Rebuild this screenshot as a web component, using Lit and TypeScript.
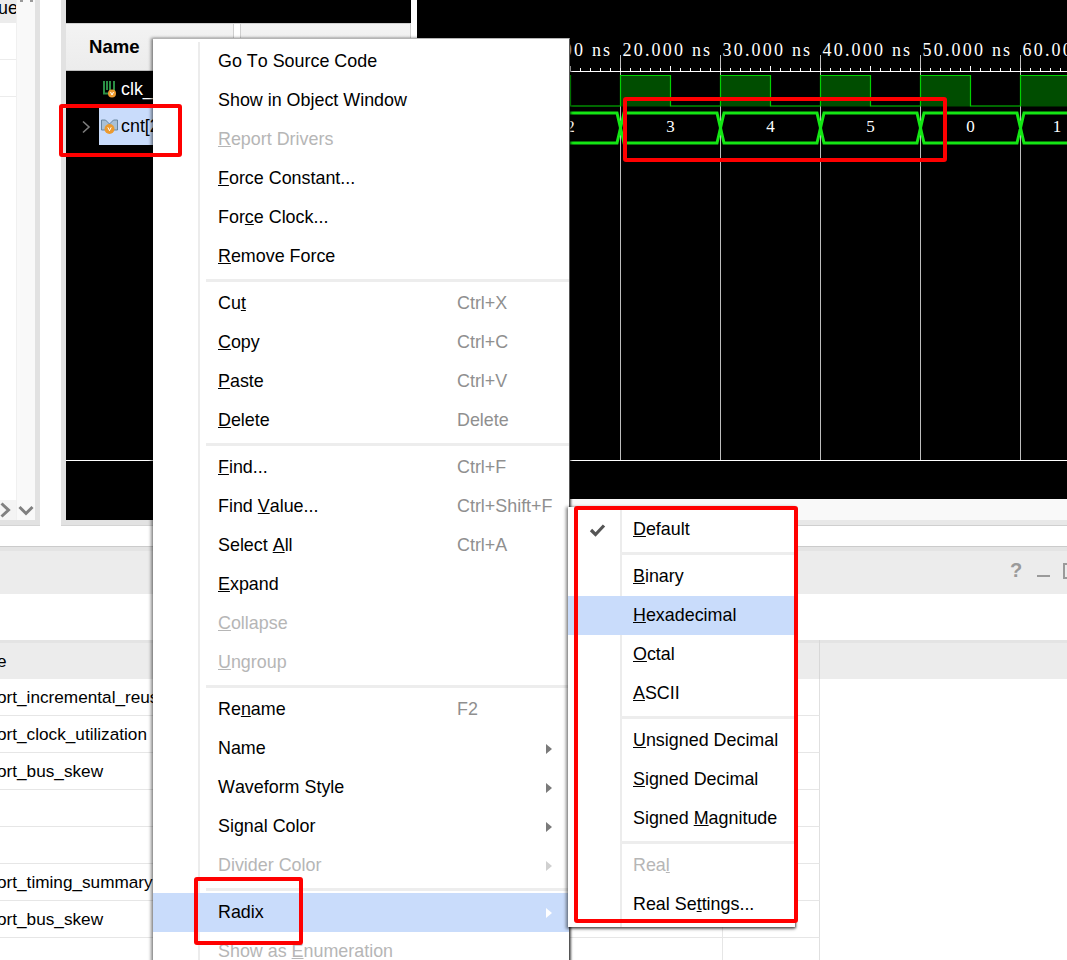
import { LitElement, html, css, svg } from "lit";
import { customElement } from "lit/decorators.js";

type Item = { l?: any; k?: string; dis?: boolean; sub?: boolean; hi?: boolean; check?: boolean; sep?: boolean };
const S: Item = { sep: true };

const MAIN: Item[] = [
  { l: "Go To Source Code" },
  { l: "Show in Object Window" },
  { l: html`<u>R</u>eport Drivers`, dis: true },
  { l: html`<u>F</u>orce Constant...` },
  { l: html`For<u>c</u>e Clock...` },
  { l: html`<u>R</u>emove Force` },
  S,
  { l: html`Cu<u>t</u>`, k: "Ctrl+X" },
  { l: html`<u>C</u>opy`, k: "Ctrl+C" },
  { l: html`<u>P</u>aste`, k: "Ctrl+V" },
  { l: html`<u>D</u>elete`, k: "Delete" },
  S,
  { l: html`<u>F</u>ind...`, k: "Ctrl+F" },
  { l: html`Find <u>V</u>alue...`, k: "Ctrl+Shift+F" },
  { l: html`Select <u>A</u>ll`, k: "Ctrl+A" },
  { l: html`<u>E</u>xpand` },
  { l: html`<u>C</u>ollapse`, dis: true },
  { l: html`<u>U</u>ngroup`, dis: true },
  S,
  { l: html`Re<u>n</u>ame`, k: "F2" },
  { l: "Name", sub: true },
  { l: "Waveform Style", sub: true },
  { l: "Signal Color", sub: true },
  { l: "Divider Color", sub: true, dis: true },
  S,
  { l: "Radix", sub: true, hi: true },
  { l: html`Show as <u>E</u>numeration`, dis: true },
];

const RADIX: Item[] = [
  { l: html`<u>D</u>efault`, check: true },
  S,
  { l: html`<u>B</u>inary` },
  { l: html`<u>H</u>exadecimal`, hi: true },
  { l: html`<u>O</u>ctal` },
  { l: html`<u>A</u>SCII` },
  S,
  { l: html`<u>U</u>nsigned Decimal` },
  { l: html`<u>S</u>igned Decimal` },
  { l: html`Signed <u>M</u>agnitude` },
  S,
  { l: html`Rea<u>l</u>`, dis: true },
  { l: html`Real Se<u>t</u>tings...` },
];

const ROWS = ["ort_incremental_reuse", "ort_clock_utilization", "ort_bus_skew", "", "", "ort_timing_summary", "ort_bus_skew", ""];

const GREEN = "#14e614";

function waveform() {
  const X0 = 417;
  const majors = [420.5, 520.5, 620.5, 720.5, 820.5, 920.5, 1020.5];
  const ticks = [];
  for (let x = 420.5; x < 1067; x += 10) {
    const isMid = Math.round((x - 420.5) / 10) % 10 === 5;
    ticks.push(svg`<line x1=${x - X0} x2=${x - X0} y1=${isMid ? 66 : 68} y2="71" stroke="#fff" stroke-width="1"/>`);
  }
  const labels = ["", "10.000 ns", "20.000 ns", "30.000 ns", "40.000 ns", "50.000 ns", "60.000 ns"];
  const values = ["", "2", "3", "4", "5", "0", "1"];
  let bus = "";
  const clk = [];
  for (let i = 1; i < majors.length; i++) {
    const a = majors[i] - X0;
    const b = a + 100;
    bus += `M${a - 3.5} 143L${a + 3.5} 113H${b - 3.5}L${b + 3.5} 143`;
    bus += `M${a - 3.5} 113L${a + 3.5} 143H${b - 3.5}L${b + 3.5} 113`;
    clk.push(svg`<rect x=${a} y="75.5" width="50" height="31" fill="#004d00"/>`);
    clk.push(svg`<path d="M${a} 106V75.5H${a + 50}V106H${a + 100}" fill="none" stroke="#00d000" stroke-width="1.2"/>`);
  }
  return html`<svg class="wave" width="650" height="499" viewBox="0 0 650 499">
    ${majors.map((m) => svg`<line x1=${m - X0} x2=${m - X0} y1="55" y2="460" stroke="#bdbdbd" stroke-width="1"/>`)}
    ${svg`<line x1="0" x2="650" y1="71.5" y2="71.5" stroke="#fff" stroke-width="1"/>`}
    ${svg`<line x1="0" x2="650" y1="460.5" y2="460.5" stroke="#fff" stroke-width="1"/>`}
    ${ticks} ${clk}
    ${svg`<path d=${bus} fill="none" stroke=${GREEN} stroke-width="3"/>`}
    ${labels.map((t, i) => svg`<text class="rule" x=${majors[i] - X0 + 2} y="56">${t}</text>`)}
    ${values.map((t, i) => svg`<text class="val" x=${i === 6 ? 640 : majors[i] - X0 + 50} y="132" text-anchor="middle">${t}</text>`)}
  </svg>`;
}

@customElement("app-root")
export class AppRoot extends LitElement {
  static styles = css`
    :host {
      display: block;
      width: 1067px;
      height: 960px;
      position: relative;
      overflow: hidden;
      background: #fff;
      font-family: "Liberation Sans", Arial, sans-serif;
      font-size: 17.9px;
      font-kerning: none;
      color: #000;
    }
    .top { display: flex; height: 526px; align-items: flex-start; }

    .left { width: 40px; height: 525px; box-sizing: border-box; border-right: 5px solid #e2e2e2; border-bottom: 5px solid #e2e2e2; box-shadow: 0 1px 0 #d4d4d4; display: flex; flex: none; }
    .left-main { width: 16px; display: flex; flex-direction: column; overflow: hidden; background: #fff; }
    .left-head { height: 23px; flex: none; background: #ececec; line-height: 16px; white-space: nowrap; text-indent: -2px; }
    .left-row { height: 36px; flex: none; border-bottom: 1px solid #ececec; }
    .left-fill { flex: 1; }
    .left-hs { height: 20px; flex: none; background: #f4f4f4; display: flex; align-items: center; justify-content: flex-start; }
    .left-vs { width: 19px; background: #f9f9f9; display: flex; flex-direction: column; justify-content: space-between; align-items: center; border-left: 1px solid #f0f0f0; box-sizing: border-box; }
    .dots { display: flex; gap: 7px; }
    .dots i { width: 3px; height: 2px; background: #9a9a9a; display: block; }
    .left-vs-btn { height: 20px; display: flex; align-items: center; justify-content: center; }

    .panel { margin-left: 21px; width: 350px; box-sizing: border-box; height: 525px; border-left: 5px solid #e2e2e2; border-bottom: 5px solid #e2e2e2; box-shadow: 0 1px 0 #d4d4d4; display: flex; flex-direction: column; background: #000; flex: none; }
    .strip { height: 23px; flex: none; background: #000; }
    .headrow { height: 48px; flex: none; display: flex; background: linear-gradient(#f3f3f3, #ececec); border-top: 1px solid #d0d0d0; border-bottom: 1px solid #bdbdbd; box-sizing: border-box; }
    .hname { width: 168px; box-sizing: border-box; padding-left: 23px; font-weight: bold; font-size: 18.6px; line-height: 46px; border-right: 1px solid #cfcfcf; }
    .hgap { width: 6px; background: #fff; border-right: 1px solid #cfcfcf; }
    .hrest { flex: 1; border-right: 1px solid #cfcfcf; }
    .sig { height: 37px; flex: none; display: flex; align-items: center; color: #fff; }
    .sig .ic { display: flex; margin-right: 3px; }
    .clk { padding-left: 36px; }
    .cnt { padding-left: 15px; }
    .chev { width: 18px; display: flex; }
    .sel { background: #c9dcfb; color: #000; display: flex; align-items: center; height: 37px; width: 54px; flex: none; overflow: hidden; white-space: nowrap; padding-left: 2px; box-sizing: border-box; }
    .panel-fill { flex: 1; }
    .panel-line { border-top: 1px solid #fff; margin-top: 315px; }
    .split { width: 6px; flex: none; background: #fff; height: 526px; }

    .right { flex: 1; height: 526px; display: flex; flex-direction: column; min-width: 0; }
    .wave { display: block; background: #000; flex: none; }
    .rule { fill: #fff; font-family: "Liberation Serif", serif; font-size: 18px; letter-spacing: 2.2px; }
    .val { fill: #fff; font-family: "Liberation Serif", serif; font-size: 17px; }
    .hscroll { height: 21px; flex: none; background: #f9f9f9; }
    .hgray { flex: 1; background: #e8e8e8; border-bottom: 1px solid #cfcfcf; }

    .gap1 { height: 20px; }
    .band { height: 48px; background: #ececec; border-top: 1px solid #cbcbcb; box-shadow: inset 0 4px 0 #e4e4e4; box-sizing: border-box; display: flex; justify-content: flex-end; align-items: center; color: #9a9a9a; overflow: hidden; }
    .q { font-weight: bold; font-size: 20px; width: 27px; }
    .min { width: 13px; height: 2px; background: #9a9a9a; margin-top: 10px; flex: none; margin-right: 13px; }
    .box { width: 10px; height: 12px; border: 2px solid #9a9a9a; flex: none; margin-right: -10px; }
    .gap2 { height: 46px; }
    .thead { height: 39px; background: #ececec; box-shadow: inset 0 3px 0 #e4e4e4; display: flex; line-height: 43px; font-size: 17.2px; }
    .th1 { width: 722px; overflow: hidden; white-space: nowrap; text-indent: -3px; }
    .th2 { width: 97px; box-sizing: border-box; }
    .th3 { flex: 1; border-left: 1px solid #d8d8d8; }
    .tr { width: 820px; height: 37px; box-sizing: border-box; border-bottom: 1px solid #e6e6e6; border-right: 1px solid #e0e0e0; display: flex; line-height: 36px; font-size: 17.2px; }
    .td1 { width: 722px; white-space: nowrap; overflow: hidden; text-indent: -3px; }
    .td2 { flex: 1; border-left: 1px solid #e6e6e6; }

    .menu { position: absolute; background: #fff; box-shadow: -1px 1px 3px 1px rgba(0,0,0,.45), 1px 1px 2px rgba(0,0,0,.5); }
    .m1 { left: 153px; top: 38px; width: 417px; padding-top: 3px; border-top: 1px solid #b4b4b4; border-right: 1px solid #555; box-sizing: border-box; height: 930px; }
    .m1::before { content: ""; position: absolute; left: 45px; top: 3px; bottom: 0; width: 2px; background: #ececec; }
    .m2 { left: 568px; top: 507px; width: 227px; height: 420px; padding-top: 3px; box-sizing: border-box; }
    .m2::before { content: ""; position: absolute; left: 52px; top: 3px; bottom: 0; width: 2px; background: #ececec; }
    .it { position: relative; height: 39px; display: flex; align-items: center; white-space: nowrap; }
    .m1 .it { padding-left: 65px; }
    .m2 .it { padding-left: 65px; }
    .hi { background: #c9dcfb; }
    .dis { color: #b6b6b6; }
    .key { position: absolute; left: 304px; color: #8f8f8f; }
    .arr { position: absolute; right: 17px; width: 0; height: 0; border-left: 6px solid #7a7a7a; border-top: 5px solid transparent; border-bottom: 5px solid transparent; }
    .dis .arr { border-left-color: #d0d0d0; }
    .hi .arr { border-left-color: #fff; }
    .chk { position: absolute; left: 21px; top: 13px; display: flex; }
    .sep { position: relative; height: 8px; display: flex; align-items: center; }
    .m1 .sep { margin-left: 53px; }
    .m2 .sep { margin-left: 52px; }
    .sep i { display: block; height: 3px; width: 100%; background: #ededed; }

    .red { position: absolute; border: 4px solid #f00; box-sizing: border-box; border-radius: 3px; }
    .r1 { left: 59px; top: 104px; width: 123px; height: 53px; }
    .r2 { left: 623px; top: 97px; width: 324px; height: 65px; }
    .r3 { left: 574px; top: 506px; width: 224px; height: 417px; }
    .r4 { left: 194px; top: 877px; width: 109px; height: 68px; }
  `;

  private renderItems(items: Item[]) {
    return items.map((it) =>
      it.sep
        ? html`<div class="sep"><i></i></div>`
        : html`<div class="it ${it.hi ? "hi" : ""} ${it.dis ? "dis" : ""}">
            ${it.check
              ? html`<span class="chk"><svg width="17" height="14" viewBox="0 0 17 14"><path d="M2 7l4.5 4.5L15 2.5" fill="none" stroke="#555" stroke-width="3.2"/></svg></span>`
              : ""}
            <span>${it.l}</span>
            ${it.k ? html`<span class="key">${it.k}</span>` : ""}
            ${it.sub ? html`<span class="arr"></span>` : ""}
          </div>`
    );
  }

  render() {
    return html`
      <div class="top">
        <div class="left">
          <div class="left-main">
            <div class="left-head">ue</div>
            <div class="left-row"></div>
            <div class="left-row"></div>
            <div class="left-fill"></div>
            <div class="left-hs">
              <svg width="12" height="16" viewBox="0 0 12 16"><path d="M1.5 1.5L8.5 8l-7 6.5" fill="none" stroke="#808080" stroke-width="3"/></svg>
            </div>
          </div>
          <div class="left-vs">
            <div class="dots"><i></i><i></i></div>
            <div class="left-vs-btn">
              <svg width="16" height="11" viewBox="0 0 16 11"><path d="M1.5 2l6.5 6.5L14.5 2" fill="none" stroke="#808080" stroke-width="3"/></svg>
            </div>
          </div>
        </div>
        <div class="panel">
          <div class="strip"></div>
          <div class="headrow">
            <div class="hname">Name</div>
            <div class="hgap"></div>
            <div class="hrest"></div>
          </div>
          <div class="sig clk">
            <span class="ic">
              <svg width="16" height="19" viewBox="0 0 16 19">
                <path d="M2 1v12.5h6V1" fill="none" stroke="#2b8f45" stroke-width="2"/>
                <path d="M5 1v9M12 1v11" fill="none" stroke="#2b8f45" stroke-width="2"/>
                <circle cx="10" cy="13.5" r="4" fill="#ec9a2e"/>
                <path d="M8.5 12l1.5 3 1.5-3" fill="none" stroke="#fff" stroke-width="1"/>
              </svg>
            </span>
            <span>clk_</span>
          </div>
          <div class="sig cnt">
            <span class="chev">
              <svg width="10" height="14" viewBox="0 0 10 14"><path d="M2 1.5L8 7l-6 5.5" fill="none" stroke="#7d7d7d" stroke-width="1.6"/></svg>
            </span>
            <div class="sel">
              <span class="ic">
                <svg width="17" height="16" viewBox="0 0 17 16">
                  <path d="M0.5 1h4l4 4 4-4h4v10h-4l-4-3-4 3h-4z" fill="#a8c0d6" stroke="#5f7d96" stroke-width="0.9"/>
                  <circle cx="8.5" cy="10" r="5" fill="#ec9a2e"/>
                  <path d="M6.8 8.3l1.7 3.4 1.7-3.4" fill="none" stroke="#fff" stroke-width="1"/>
                </svg>
              </span>
              <span>cnt[2</span>
            </div>
          </div>
          <div class="panel-fill"><div class="panel-line"></div></div>
        </div>
        <div class="split"></div>
        <div class="right">
          ${waveform()}
          <div class="hscroll"></div>
          <div class="hgray"></div>
        </div>
      </div>
      <div class="gap1"></div>
      <div class="band">
        <span class="q">?</span>
        <span class="min"></span>
        <span class="box"></span>
      </div>
      <div class="gap2"></div>
      <div class="thead">
        <div class="th1">e</div>
        <div class="th2"></div>
        <div class="th3"></div>
      </div>
      ${ROWS.map(
        (r) => html`<div class="tr"><div class="td1">${r}</div><div class="td2"></div></div>`
      )}

      <div class="menu m1">${this.renderItems(MAIN)}</div>
      <div class="menu m2">${this.renderItems(RADIX)}</div>

      <div class="red r1"></div>
      <div class="red r2"></div>
      <div class="red r3"></div>
      <div class="red r4"></div>
    `;
  }
}
